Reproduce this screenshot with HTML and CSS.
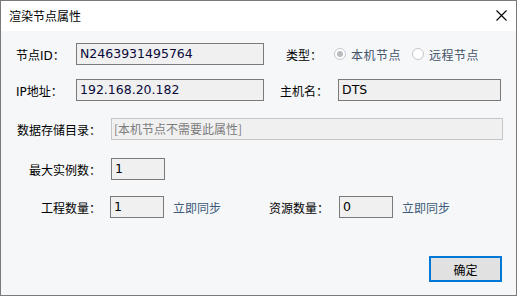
FILE: index.html
```html
<!DOCTYPE html>
<html lang="zh-CN">
<head>
    <meta charset="UTF-8">
    <title>渲染节点属性</title>
    <link rel="stylesheet" href="styles.css">
</head>
<body>

    <div class="dialog">
        <div class="titlebar">
            <span class="title">渲染节点属性</span>
            <span class="close">
                <svg width="11" height="11" viewBox="0 0 11 11">
                    <path d="M0.5 0.5 L10.5 10.5 M10.5 0.5 L0.5 10.5" stroke="#000" stroke-width="1.1" fill="none"/>
                </svg>
            </span>
        </div>

        <div class="content">

            <div class="row row-1">
                <span class="label label-top">节点ID：</span>
                <div class="field field-id">N2463931495764</div>
                <span class="label label-type">类型：</span>
                <span class="radio checked"></span>
                <span class="radio-text">本机节点</span>
                <span class="radio radio-2"></span>
                <span class="radio-text">远程节点</span>
            </div>

            <div class="row row-2">
                <span class="label label-top">IP地址：</span>
                <div class="field field-id">192.168.20.182</div>
                <span class="label label-host">主机名：</span>
                <div class="field field-host">DTS</div>
            </div>

            <div class="row row-3">
                <span class="label label-left">数据存储目录：</span>
                <div class="field field-dir">[本机节点不需要此属性]</div>
            </div>

            <div class="row row-4">
                <span class="label label-left">最大实例数：</span>
                <div class="field field-small">1</div>
            </div>

            <div class="row row-5">
                <span class="label label-left">工程数量：</span>
                <div class="field field-small field-proj">1</div>
                <span class="sync">立即同步</span>
                <span class="label label-res">资源数量：</span>
                <div class="field field-small">0</div>
                <span class="sync">立即同步</span>
            </div>

            <div class="footer">
                <button class="ok">确定</button>
            </div>

        </div>
    </div>

</body>
</html>
```

FILE: styles.css
```css
/* * {
    border: 1px solid red;
} */

body {
    margin: 0;
    font-family: "DejaVu Sans", "Noto Sans CJK SC", sans-serif;
    font-size: 12px;
    color: #000;
}

.dialog {
    width: 517px;
    height: 296px;
    box-sizing: border-box;
    border: 1px solid #7a7a7a;
    background: #f6f7f9;
    display: flex;
    flex-direction: column;
}

.titlebar {
    height: 30px;
    background: #fff;
    display: flex;
    align-items: center;
    justify-content: space-between;
    padding: 0 9px 0 8px;
}

.title {
    font-family: "Noto Sans CJK SC", sans-serif;
    font-size: 12px;
    margin-top: -1px;
}

.close {
    display: flex;
    margin-top: -1px;
}

.content {
    flex: 1;
    display: flex;
    flex-direction: column;
}

.row {
    display: flex;
    align-items: center;
    height: 22px;
}

.row-1 { margin-top: 12px; }
.row-2 { margin-top: 14px; }
.row-3 { margin-top: 17px; }
.row-4 { margin-top: 18px; }
.row-5 { margin-top: 16px; }

.label {
    font-family: "Noto Sans CJK SC", sans-serif;
    font-size: 12px;
    white-space: nowrap;
}

.label-top {
    width: 60px;
    padding-left: 15px;
    font-family: "DejaVu Sans", "Noto Sans CJK SC", sans-serif;
}

.label-left {
    width: 100px;
    text-align: right;
    margin-right: 10px;
}

.label-type {
    margin-left: 22px;
    width: 48px;
}

.label-host {
    margin-left: 16px;
    width: 58px;
}

.label-res {
    margin-left: 48px;
    width: 70px;
}

.field {
    height: 22px;
    box-sizing: border-box;
    border: 1px solid #7a7a7a;
    background: #f0f0f0;
    font-size: 12.5px;
    line-height: 20px;
    padding: 0 3px;
    white-space: nowrap;
    color: #000;
}

.field-id {
    width: 188px;
    color: #0a0a3c;
}

.field-host {
    width: 163px;
}

.field-dir {
    width: 392px;
    border-color: #c6c6c6;
    color: #7c7c7c;
    font-family: "Noto Sans CJK SC", sans-serif;
    font-size: 12px;
    padding-left: 2px;
}

.field-small {
    width: 54px;
}

.field-proj {
    margin-left: -1px;
}

.radio {
    width: 12px;
    height: 12px;
    box-sizing: border-box;
    border: 1px solid #c4c8cc;
    border-radius: 50%;
    background: #fff;
    position: relative;
}

.radio.checked::after {
    content: "";
    position: absolute;
    left: 2px;
    top: 2px;
    width: 6px;
    height: 6px;
    border-radius: 50%;
    background: #b8bcc0;
}

.radio-2 {
    margin-left: 11px;
}

.radio-text {
    font-family: "Noto Sans CJK SC", sans-serif;
    color: #44546a;
    margin-left: 5px;
    letter-spacing: 0.5px;
}

.sync {
    font-family: "Noto Sans CJK SC", sans-serif;
    color: #3d5a78;
    margin-left: 9px;
}

.footer {
    margin-top: auto;
    display: flex;
    justify-content: flex-end;
    padding: 0 14px 13px 0;
}

.ok {
    width: 73px;
    height: 26px;
    box-sizing: border-box;
    border: 2px solid #0078d7;
    background: #e1e1e1;
    font-family: "Noto Sans CJK SC", sans-serif;
    font-size: 12px;
    color: #000;
    padding: 0;
}
```
